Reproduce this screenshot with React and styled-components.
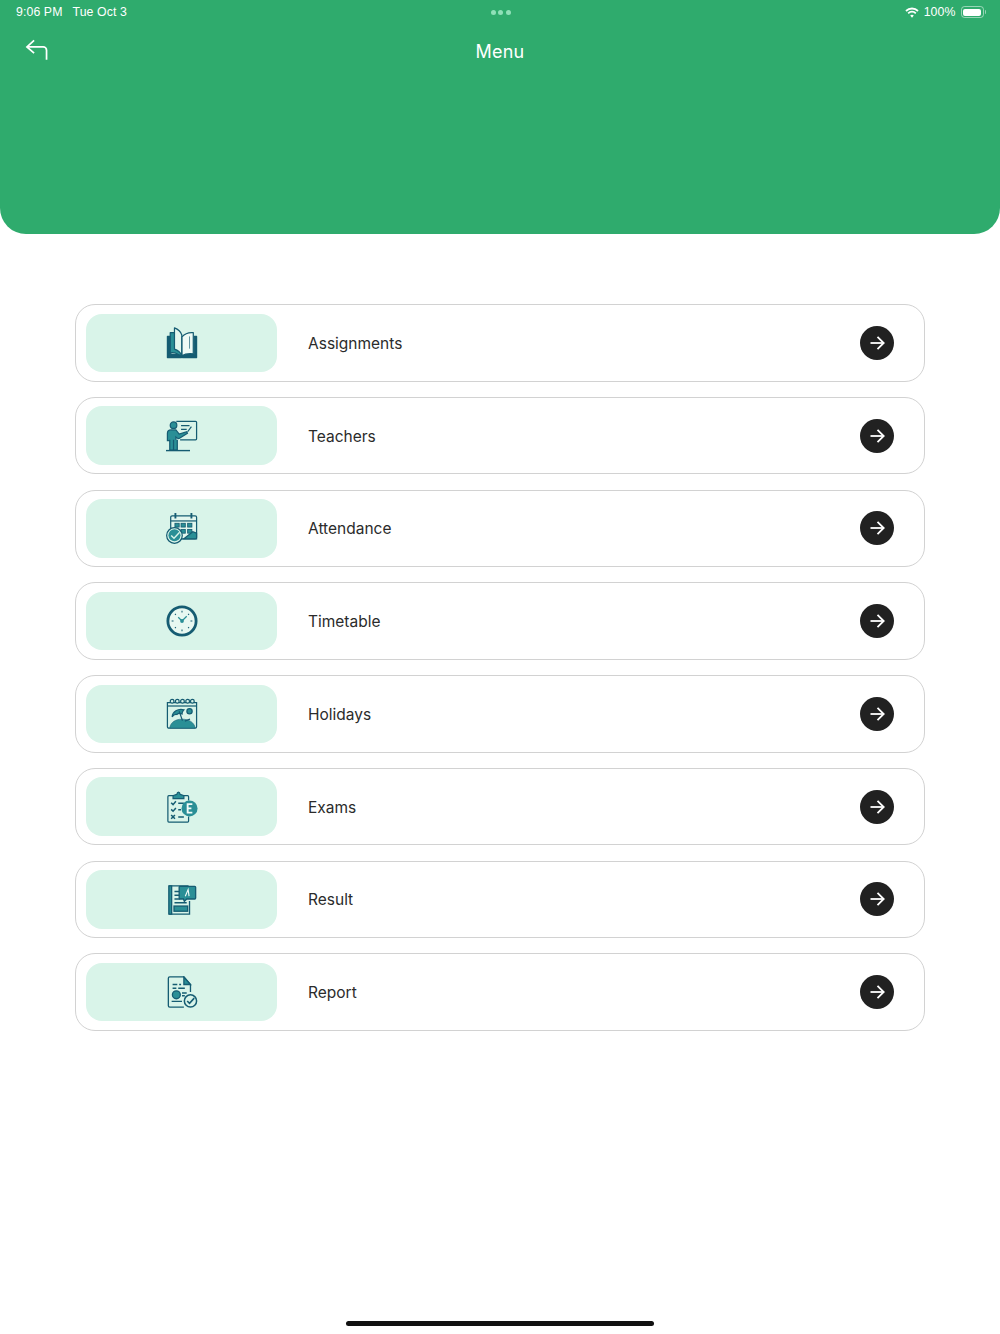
import React from "react";
import styled, { createGlobalStyle } from "styled-components";

const DARK = "#155c72";
const MID = "#2a8f96";
const PALE = "#d9f4e9";

const GlobalStyle = createGlobalStyle`
  html, body {
    margin: 0;
    padding: 0;
    background: #fff;
  }
  * {
    box-sizing: border-box;
  }
`;

const BookIcon = () => (
  <svg width="32" height="32" viewBox="0 0 34 34" fill="none" stroke={DARK} strokeWidth="1.300" strokeLinejoin="round">
    <path d="M1.500 10H5v19h11.500v3.500H1.500z" fill={DARK} />
    <path d="M32.500 10H30v19H17.500v3.500h15z" fill={DARK} />
    <path d="M4.500 6v21.500c3-.5 6 0 8 1.500l4 1.500V13c-1-2-3-5-6-7z" fill={MID} />
    <path d="M9 1c4 1.500 6.500 3.500 7.800 7.500v22c-1.500-3.500-4.500-6-7.800-7z" fill="#e3f7ee" />
    <path d="M17 10.500c3-3.500 7-5 12-4.500v22.500c-5-.5-9 0-12 2z" fill="#eefaf5" />
    <path d="M25 10v13" strokeWidth=".7" />
  </svg>
);

const TeacherIcon = () => (
  <svg width="32" height="32" viewBox="0 0 34 34" fill="none" stroke={DARK} strokeWidth="1.300">
    <path d="M11 1.500h20.500a1 1 0 0 1 1 1V20a1 1 0 0 1-1 1H15" />
    <path d="M16 6h9M16 10h6" strokeWidth="1.500" />
    <circle cx="8" cy="5.500" r="3.500" fill={MID} />
    <path d="M1.500 22v-8c0-2.500 2-3.500 4-3.500h5l3.500 4.500 8-2.500.8 1.700-8 5c-1.200.7-2.300.6-3.300-.2l-1-.8V22H1.500z" fill={MID} />
    <path d="M4 21v11h4V21M8 21v11h4V21" fill={MID} />
    <path d="M23 12.500l4-5.500" />
    <path d="M0 32.500h25.500" strokeWidth="1.500" />
  </svg>
);

const CalendarIcon = () => (
  <svg width="32" height="32" viewBox="0 0 34 34" fill="none" stroke={DARK} strokeWidth="1.300">
    <rect x="5" y="4" width="27.500" height="24.500" rx="1.500" fill="#e3f7ee" />
    <path d="M5 9.500h27.500" />
    <path d="M10 1v6M27 1v6" strokeWidth="2" />
    <g fill={MID} strokeWidth=".9">
      <rect x="9.500" y="12" width="4.500" height="4" />
      <rect x="16" y="12" width="4.500" height="4" />
      <rect x="23" y="12" width="4.500" height="4" />
      <rect x="16" y="18.500" width="4.500" height="4" />
      <rect x="23" y="18.500" width="4.500" height="4" />
    </g>
    <path d="M19 28.500l9.500-7.500 4 1.500v6z" fill={MID} />
    <circle cx="9" cy="25" r="8.300" fill={PALE} />
    <circle cx="9" cy="24.700" r="6.400" fill={MID} stroke="none" />
    <path d="M5.500 25l3 3 6-6.500" stroke={PALE} strokeWidth="1.500" />
  </svg>
);

const ClockIcon = () => (
  <svg width="32" height="32" viewBox="0 0 34 34" fill="none">
    <circle cx="17" cy="17" r="15" fill="#e8f8f1" stroke={DARK} strokeWidth="3" />
    <path d="M17 6v2M17 26v2M6 17h2M26 17h2M9.500 9.500l1 1M24.500 9.500l-1 1M9.500 24.500l1-1M24.500 24.500l-1-1" stroke={DARK} strokeWidth="1.100" />
    <path d="M17 17l-4-4M17 17l5-5" stroke={MID} strokeWidth="1.300" />
    <circle cx="17" cy="17" r="2" fill={MID} />
  </svg>
);

const HolidayIcon = () => (
  <svg width="32" height="32" viewBox="0 0 34 34" fill="none" stroke={DARK} strokeWidth="1.300">
    <path d="M1.500 5h31v25.500a1.500 1.500 0 0 1-1.500 1.500H3a1.500 1.500 0 0 1-1.500-1.500z" />
    <path d="M1.500 8.500h31" />
    <g fill={PALE}>
      <circle cx="6.500" cy="3.500" r="2" />
      <circle cx="12" cy="3.500" r="2" />
      <circle cx="17.500" cy="3.500" r="2" />
      <circle cx="23" cy="3.500" r="2" />
      <circle cx="28" cy="3.500" r="2" />
    </g>
    <circle cx="25" cy="14" r="2.800" fill={MID} />
    <path d="M4 32c.5-6 6-9.500 13-9.500s13 3 14 9.500z" fill={MID} stroke={DARK} strokeWidth=".6" />
    <path d="M6.500 20c.5-5.500 6-9 12.500-7.500-1.500 1.500-2 3-2 4.500-2-1-4-1-5.500.5-1.800-.5-3.800.7-5 2.500z" fill={MID} />
    <path d="M14 14l3.500 10M20 24.500l5.500-2" />
  </svg>
);

const ExamIcon = () => (
  <svg width="32" height="32" viewBox="0 0 34 34" fill="none" stroke={DARK} strokeWidth="1.300">
    <path d="M8 5H3a1 1 0 0 0-1 1v26a1 1 0 0 0 1 1h20a1 1 0 0 0 1-1v-5M24 10V6a1 1 0 0 0-1-1h-5" />
    <path d="M7.500 8V5l4-1.500c.5-3 3-3 3.500 0L19 5v3z" fill={MID} />
    <path d="M5.500 12.500l2 2 3-3.500M5.500 19.500l2 2 3-3.500M5.500 25.500l4 4M9.500 25.500l-4 4" strokeWidth="1.600" />
    <path d="M13 13h6M13 20h3M13 27.500h6" strokeWidth="1.600" />
    <circle cx="25" cy="18.500" r="8.500" fill={MID} stroke="none" />
    <path d="M22 14h6M22 18.500h5M22 23h6M23 14v9" stroke="#f2fbf7" strokeWidth="2" />
  </svg>
);

const ResultIcon = () => (
  <svg width="32" height="32" viewBox="0 0 34 34" fill="none" stroke={DARK} strokeWidth="1.400">
    <path d="M24 3H4v30h21V19" />
    <path d="M3 3h3v30H3z" fill={MID} />
    <path d="M9 9h6M9 13h6M9 17h6M9 21h13" strokeWidth="1.600" />
    <rect x="8.500" y="24.500" width="14.500" height="5.500" fill={MID} />
    <path d="M14 4.500a1 1 0 0 1 1-1h15.500a1 1 0 0 1 1 1V16a1 1 0 0 1-1 1H22l-2.500 2.500-1-2.500H15a1 1 0 0 1-1-1z" fill={MID} />
    <path d="M20.500 14l3-7 1 7" stroke="#f2fbf7" strokeWidth="1.200" />
  </svg>
);

const ReportIcon = () => (
  <svg width="32" height="32" viewBox="0 0 34 34" fill="none" stroke={DARK} strokeWidth="1.400">
    <path d="M19 33H4a1.500 1.500 0 0 1-1.500-1.500v-29A1.500 1.500 0 0 1 4 1h15l7 8v8" />
    <path d="M19 1v8h7z" fill={MID} />
    <path d="M7 9h5M14 9h2M7 13h4M13 13h7" strokeWidth="1.500" />
    <circle cx="11" cy="20" r="4.200" fill={MID} />
    <path d="M17 18h5M17 21h3M6 27h11" strokeWidth="1.500" />
    <circle cx="26" cy="26.500" r="6.500" fill={PALE} strokeWidth="1.600" />
    <path d="M22.500 26.500l2.500 2.500 5-5.500" strokeWidth="1.700" />
  </svg>
);

const ITEMS = [
  { label: "Assignments", Icon: BookIcon },
  { label: "Teachers", Icon: TeacherIcon },
  { label: "Attendance", Icon: CalendarIcon },
  { label: "Timetable", Icon: ClockIcon },
  { label: "Holidays", Icon: HolidayIcon },
  { label: "Exams", Icon: ExamIcon },
  { label: "Result", Icon: ResultIcon },
  { label: "Report", Icon: ReportIcon },
];

const App = () => {
  return (
    <Page>
      <GlobalStyle />
      <Header>
        <StatusBar>
          <StatusLeft>
            <span>9:06 PM</span>
            <span>Tue Oct 3</span>
          </StatusLeft>
          <Dots>
            <i />
            <i />
            <i />
          </Dots>
          <StatusRight>
            <svg width="14" height="11" viewBox="0 0 14 11" fill="none" stroke="#fff" strokeWidth="1.800">
              <path d="M1 4a8.500 8.500 0 0 1 12 0" />
              <path d="M3.200 6.300a5.300 5.300 0 0 1 7.600 0" />
              <path d="M7 10.800L5.200 8.600a2.600 2.600 0 0 1 3.600 0z" fill="#fff" stroke="none" />
            </svg>
            <span>100%</span>
            <Battery>
              <BatteryFill />
            </Battery>
            <BatteryCap />
          </StatusRight>
        </StatusBar>
        <NavBar>
          <BackButton>
            <svg width="23" height="22" viewBox="0 0 24 23" fill="none" stroke="#fff" strokeWidth="1.800">
              <path d="M9.500 1.500L2 8.300l7.500 6.500" />
              <path d="M2 8.300h17a3.500 3.500 0 0 1 3.500 3.500v10" />
            </svg>
          </BackButton>
          <Title>Menu</Title>
        </NavBar>
      </Header>
      <List>
        {ITEMS.map(({ label, Icon }) => (
          <Row key={label}>
            <IconTile>
              <Icon />
            </IconTile>
            <Label>{label}</Label>
            <Arrow>
              <svg width="16" height="16" viewBox="0 0 16 16" fill="none" stroke="#fff" strokeWidth="1.800">
                <path d="M1.500 8h13" />
                <path d="M8.500 1.800L14.700 8l-6.200 6.200" />
              </svg>
            </Arrow>
          </Row>
        ))}
      </List>
      <HomeBar />
    </Page>
  );
};

const Page = styled.div`
  width: 1000px;
  height: 1334px;
  display: flex;
  flex-direction: column;
  overflow: hidden;
  background: #fff;
  font-family: "Inter", "Liberation Sans", sans-serif;
`;

const Header = styled.header`
  height: 234px;
  background: #2fab6d;
  border-radius: 0 0 26px 26px;
  color: #fff;
`;

const StatusBar = styled.div`
  height: 24px;
  padding: 0 14px 0 16px;
  display: grid;
  grid-template-columns: 1fr auto 1fr;
  align-items: center;
  font-family: "Liberation Sans", sans-serif;
  font-size: 12.300px;
  letter-spacing: 0.1px;
`;

const StatusLeft = styled.div`
  display: flex;
  gap: 10px;
`;

const Dots = styled.div`
  display: flex;
  gap: 2.500px;
  margin-left: -1px;
  i {
    width: 5px;
    height: 5px;
    border-radius: 50%;
    background: #8fe0b8;
  }
`;

const StatusRight = styled.div`
  display: flex;
  align-items: center;
  justify-content: flex-end;
  gap: 5px;
`;

const Battery = styled.div`
  width: 23px;
  height: 12px;
  padding: 1.500px;
  border: 1px solid rgba(255, 255, 255, 0.5);
  border-radius: 3.500px;
`;

const BatteryFill = styled.div`
  height: 100%;
  background: #fff;
  border-radius: 2px;
`;

const BatteryCap = styled.div`
  width: 1.500px;
  height: 4px;
  margin-left: -4px;
  background: rgba(255, 255, 255, 0.5);
  border-radius: 0 1px 1px 0;
`;

const NavBar = styled.div`
  height: 55px;
  position: relative;
  display: flex;
  align-items: center;
  justify-content: center;
`;

const BackButton = styled.div`
  position: absolute;
  left: 25px;
  top: 15px;
  line-height: 0;
`;

const Title = styled.h1`
  margin: 0;
  font-size: 18px;
  font-weight: 400;
  letter-spacing: 0.2px;
`;

const List = styled.main`
  padding: 70px 75px 0;
  display: flex;
  flex-direction: column;
  gap: 15.250px;
`;

const Row = styled.div`
  height: 77.500px;
  padding: 0 30px 0 10px;
  display: flex;
  align-items: center;
  border: 1.500px solid #d2d2d2;
  border-radius: 20px;
`;

const IconTile = styled.div`
  width: 191px;
  height: 58.500px;
  flex: none;
  display: flex;
  align-items: center;
  justify-content: center;
  background: #d9f4e9;
  border-radius: 16px;
`;

const Label = styled.span`
  margin-left: 31px;
  padding-top: 1px;
  flex: 1;
  font-size: 15.500px;
  color: #2b2b2b;
`;

const Arrow = styled.div`
  width: 34px;
  height: 34px;
  display: flex;
  align-items: center;
  justify-content: center;
  background: #212121;
  border-radius: 50%;
`;

const HomeBar = styled.div`
  width: 308px;
  height: 5px;
  margin: auto auto 8px;
  background: #111;
  border-radius: 3px;
`;

export default App;
